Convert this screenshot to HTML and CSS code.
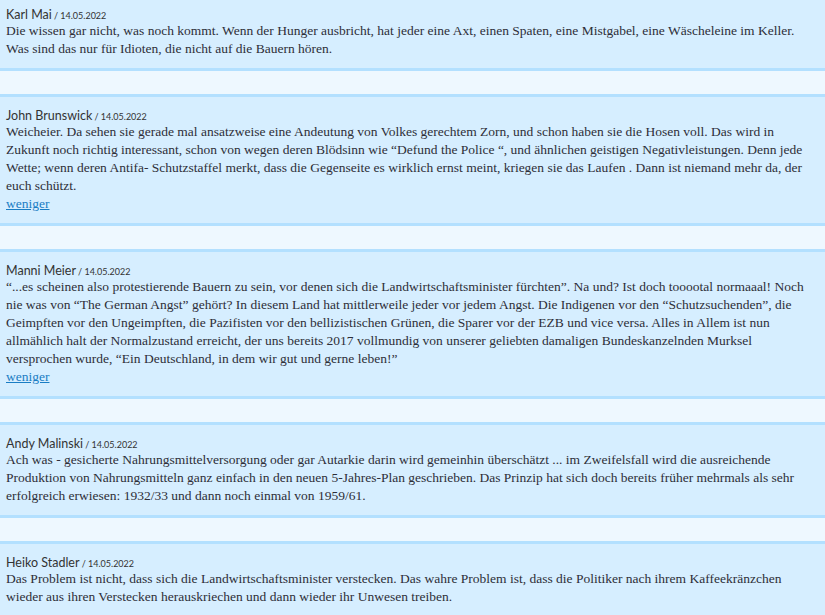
FILE: index.html
```html
<!DOCTYPE html>
<html lang="de">
<head>
<meta charset="utf-8">
<title>Kommentare</title>
<link rel="stylesheet" href="styles.css">
</head>
<body>
<div class="comments">
  <div class="comment">
    <div class="meta"><span class="author">Karl Mai</span> <span class="date">/ 14.05.2022</span></div>
    <p class="text">Die wissen gar nicht, was noch kommt. Wenn der Hunger ausbricht, hat jeder eine Axt, einen Spaten, eine Mistgabel, eine Wäscheleine im Keller. Was sind das nur für Idioten, die nicht auf die Bauern hören.</p>
  </div>
  <div class="comment">
    <div class="meta"><span class="author">John Brunswick</span> <span class="date">/ 14.05.2022</span></div>
    <p class="text">Weicheier. Da sehen sie gerade mal ansatzweise eine Andeutung von Volkes gerechtem Zorn, und schon haben sie die Hosen voll. Das wird in Zukunft noch richtig interessant, schon von wegen deren Blödsinn wie “Defund the Police “, und ähnlichen geistigen Negativleistungen. Denn jede Wette; wenn deren Antifa- Schutzstaffel merkt, dass die Gegenseite es wirklich ernst meint, kriegen sie das Laufen . Dann ist niemand mehr da, der euch schützt.</p>
    <a class="more" href="#">weniger</a>
  </div>
  <div class="comment">
    <div class="meta"><span class="author">Manni Meier</span> <span class="date">/ 14.05.2022</span></div>
    <p class="text">“...es scheinen also protestierende Bauern zu sein, vor denen sich die Landwirtschaftsminister fürchten”. Na und? Ist doch tooootal normaaal! Noch nie was von “The German Angst” gehört? In diesem Land hat mittlerweile jeder vor jedem Angst. Die Indigenen vor den “Schutzsuchenden”, die Geimpften vor den Ungeimpften, die Pazifisten vor den bellizistischen Grünen, die Sparer vor der EZB und vice versa. Alles in Allem ist nun allmählich halt der Normalzustand erreicht, der uns bereits 2017 vollmundig von unserer geliebten damaligen Bundeskanzelnden Murksel versprochen wurde, “Ein Deutschland, in dem wir gut und gerne leben!”</p>
    <a class="more" href="#">weniger</a>
  </div>
  <div class="comment">
    <div class="meta"><span class="author">Andy Malinski</span> <span class="date">/ 14.05.2022</span></div>
    <p class="text">Ach was - gesicherte Nahrungsmittelversorgung oder gar Autarkie darin wird gemeinhin überschätzt ... im Zweifelsfall wird die ausreichende Produktion von Nahrungsmitteln ganz einfach in den neuen 5-Jahres-Plan geschrieben. Das Prinzip hat sich doch bereits früher mehrmals als sehr erfolgreich erwiesen: 1932/33 und dann noch einmal von 1959/61.</p>
  </div>
  <div class="comment">
    <div class="meta"><span class="author">Heiko Stadler</span> <span class="date">/ 14.05.2022</span></div>
    <p class="text">Das Problem ist nicht, dass sich die Landwirtschaftsminister verstecken. Das wahre Problem ist, dass die Politiker nach ihrem Kaffeekränzchen wieder aus ihren Verstecken herauskriechen und dann wieder ihr Unwesen treiben.</p>
  </div>
</div>
</body>
</html>
```
FILE: styles.css
```css
html, body {
  margin: 0;
  padding: 0;
  background: #eef8ff;
}
body {
  overflow: hidden;
}
.comments {
  display: flex;
  flex-direction: column;
  gap: 23px;
  margin-top: -7px;
}
.comment {
  background: #d6eeff;
  border-top: 3px solid #b3e0ff;
  border-bottom: 3px solid #b3e0ff;
  padding: 8px 6px 10px 6px;
  color: #2b2b2b;
}
.meta {
  font-family: "Lato", "Noto Sans", sans-serif;
  line-height: 18px;
  height: 18px;
  color: #333;
}
.author {
  font-size: 12.5px;
}
.date {
  font-size: 9px;
  margin-left: -2px;
}
.text {
  margin: 0;
  font-family: "Liberation Serif", "Times New Roman", serif;
  font-size: 13.5px;
  line-height: 18px;
  color: #2e2e38;
}
.more {
  display: block;
  font-family: "Liberation Serif", "Times New Roman", serif;
  font-size: 13.5px;
  line-height: 18px;
  color: #1a7dc4;
  text-decoration: underline;
  width: max-content;
}
```
